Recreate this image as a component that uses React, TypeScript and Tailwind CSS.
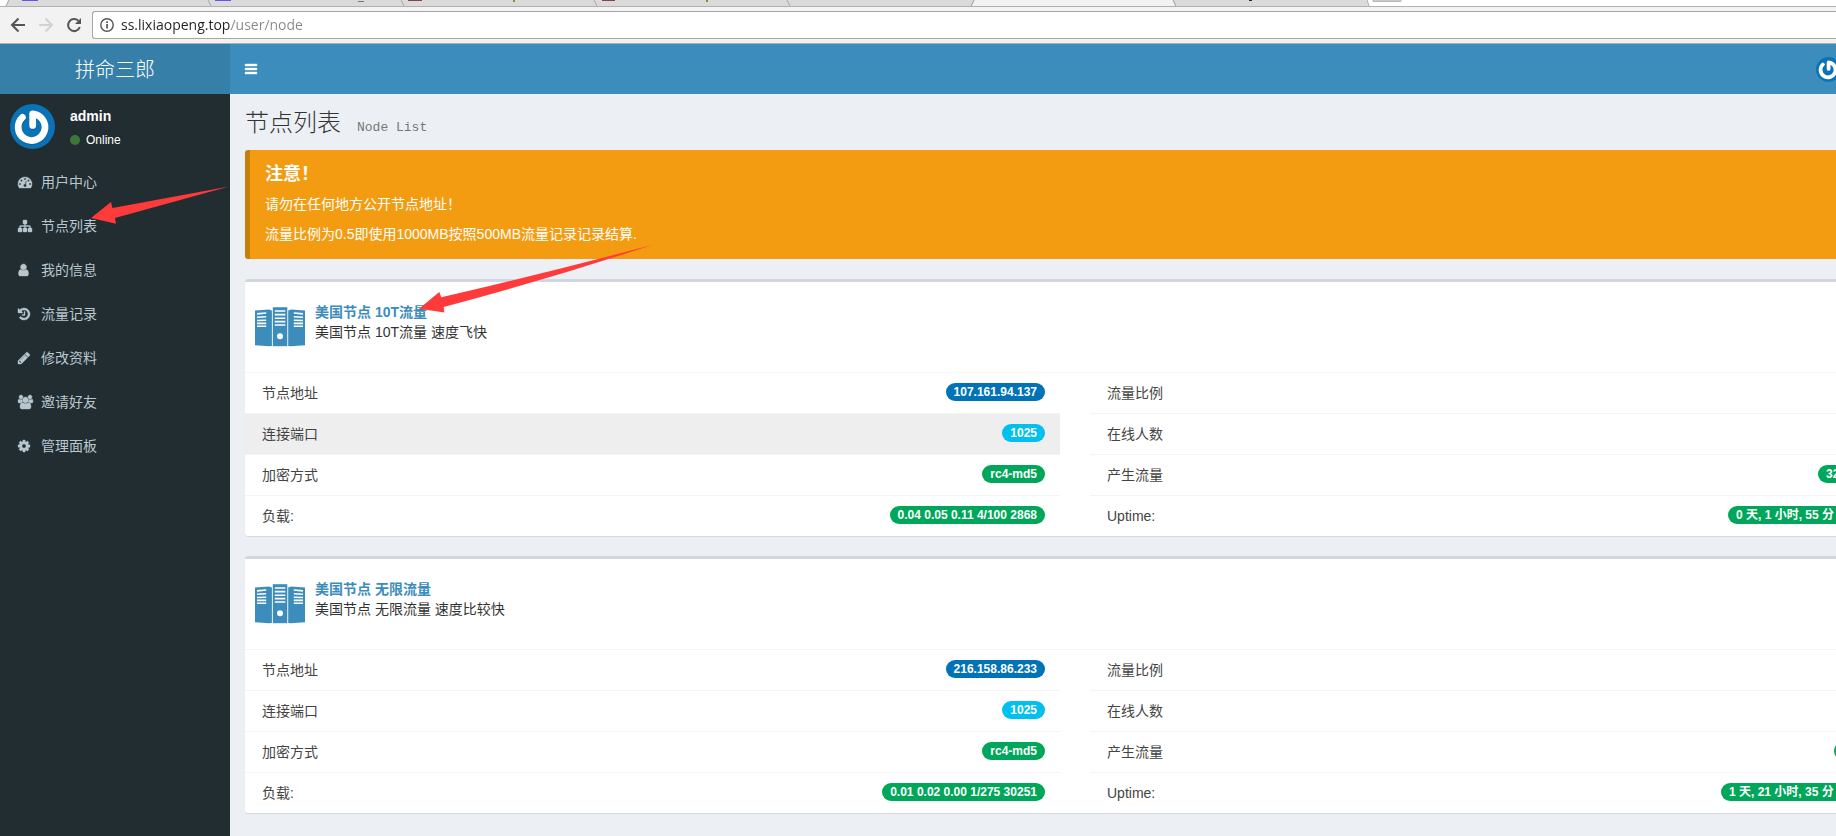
import React from "react";

const PATHS = {
  bars: "M1664 1344v128q0 26-19 45t-45 19h-1408q-26 0-45-19t-19-45v-128q0-26 19-45t45-19h1408q26 0 45 19t19 45zm0-512v128q0 26-19 45t-45 19h-1408q-26 0-45-19t-19-45v-128q0-26 19-45t45-19h1408q26 0 45 19t19 45zm0-512v128q0 26-19 45t-45 19h-1408q-26 0-45-19t-19-45v-128q0-26 19-45t45-19h1408q26 0 45 19t19 45z",
  dashboard: "M384 1152q0-53-37.5-90.5t-90.5-37.5-90.5 37.5-37.5 90.5 37.5 90.5 90.5 37.5 90.5-37.5 37.5-90.5zm192-448q0-53-37.5-90.5t-90.5-37.5-90.5 37.5-37.5 90.5 37.5 90.5 90.5 37.5 90.5-37.5 37.5-90.5zm428 481l101-382q6-26-7.5-48.5t-38.5-29.5-48 6.5-30 39.5l-101 382q-60 5-107 43.5t-63 98.5q-20 77 20 146t117 89 146-20 89-117q16-60-6-117t-72-91zm660-33q0-53-37.5-90.5t-90.5-37.5-90.5 37.5-37.5 90.5 37.5 90.5 90.5 37.5 90.5-37.5 37.5-90.5zm-640-640q0-53-37.5-90.5t-90.5-37.5-90.5 37.5-37.5 90.5 37.5 90.5 90.5 37.5 90.5-37.5 37.5-90.5zm448 192q0-53-37.5-90.5t-90.5-37.5-90.5 37.5-37.5 90.5 37.5 90.5 90.5 37.5 90.5-37.5 37.5-90.5zm320 448q0 261-141 483-19 29-54 29h-1402q-35 0-54-29-141-221-141-483 0-182 71-348t191-286 286-191 348-71 348 71 286 191 191 286 71 348z",
  sitemap: "M1792 1248v320q0 40-28 68t-68 28h-320q-40 0-68-28t-28-68v-320q0-40 28-68t68-28h96v-192h-512v192h96q40 0 68 28t28 68v320q0 40-28 68t-68 28h-320q-40 0-68-28t-28-68v-320q0-40 28-68t68-28h96v-192h-512v192h96q40 0 68 28t28 68v320q0 40-28 68t-68 28h-320q-40 0-68-28t-28-68v-320q0-40 28-68t68-28h96v-192q0-52 38-90t90-38h512v-192h-96q-40 0-68-28t-28-68v-320q0-40 28-68t68-28h320q40 0 68 28t28 68v320q0 40-28 68t-68 28h-96v192h512q52 0 90 38t38 90v192h96q40 0 68 28t28 68z",
  user: "M1536 1399q0 109-62.5 187t-150.5 78h-854q-88 0-150.5-78t-62.5-187q0-85 8.5-160.5t31.5-152 58.5-131 94-89 134.5-34.5q131 128 313 128t313-128q76 0 134.5 34.5t94 89 58.5 131 31.5 152 8.5 160.5zm-256-887q0 159-112.5 271.5t-271.5 112.5-271.5-112.5-112.5-271.5 112.5-271.5 271.5-112.5 271.5 112.5 112.5 271.5z",
  history: "M1664 896q0 156-61 298t-164 245-245 164-298 61q-172 0-327-72.5t-264-204.5q-7-10-6.5-22.5t8.5-20.5l137-138q10-9 25-9 16 2 23 12 73 95 179 147t225 52q104 0 198.5-40.5t163.5-109.5 109.5-163.5 40.5-198.5-40.5-198.5-109.5-163.5-163.5-109.5-198.5-40.5q-98 0-188 35.5t-160 101.5l137 138q31 30 14 69-17 40-59 40h-448q-26 0-45-19t-19-45v-448q0-42 40-59 39-17 69 14l130 129q107-101 244.5-156.5t284.5-55.5q156 0 298 61t245 164 164 245 61 298zm-640-288v448q0 14-9 23t-23 9h-320q-14 0-23-9t-9-23v-64q0-14 9-23t23-9h224v-352q0-14 9-23t23-9h64q14 0 23 9t9 23z",
  pencil: "M491 1536l91-91-235-235-91 91v107h128v128h107zm523-928q0-22-22-22-10 0-17 7l-542 542q-7 7-7 17 0 22 22 22 10 0 17-7l542-542q7-7 7-17zm-54-192l416 416-832 832h-416v-416zm683 96q0 53-37 90l-166 166-416-416 166-165q36-38 90-38 53 0 91 38l235 234q37 39 37 91z",
  users: "M593 896q-162 5-265 128h-134q-82 0-138-40.5t-56-118.5q0-353 124-353 6 0 43.5 21t97.5 42.5 119 21.5q67 0 133-23-5 37-5 66 0 139 81 256zm1071 637q0 120-73 189.5t-194 69.5h-874q-121 0-194-69.5t-73-189.5q0-53 3.5-103.5t14-109 26.5-108.5 43-97.5 62-81 85.5-53.5 111.5-20q10 0 43 21.5t73 48 107 48 135 21.5 135-21.5 107-48 73-48 43-21.5q61 0 111.5 20t85.5 53.5 62 81 43 97.5 26.5 108.5 14 109 3.5 103.5zm-1024-1277q0 106-75 181t-181 75-181-75-75-181 75-181 181-75 181 75 75 181zm704 384q0 159-112.5 271.5t-271.5 112.5-271.5-112.5-112.5-271.5 112.5-271.5 271.5-112.5 271.5 112.5 112.5 271.5zm576 225q0 78-56 118.5t-138 40.5h-134q-103-123-265-128 81-117 81-256 0-29-5-66 66 23 133 23 59 0 119-21.5t97.5-42.5 43.5-21q124 0 124 353zm-128-609q0 106-75 181t-181 75-181-75-75-181 75-181 181-75 181 75 75 181z",
  cog: "M1152 896q0-106-75-181t-181-75-181 75-75 181 75 181 181 75 181-75 75-181zm512-109v222q0 12-8 23t-20 13l-185 28q-19 54-39 91 35 50 107 138 10 12 10 25t-9 23q-27 37-99 108t-94 71q-12 0-26-9l-138-108q-44 23-91 38-16 136-29 186-7 28-36 28h-222q-14 0-24.5-8.5t-11.5-21.5l-28-184q-49-16-90-37l-141 107q-10 9-25 9-14 0-25-11-126-114-165-168-7-10-7-23 0-12 8-23 15-21 51-66.5t54-70.5q-27-50-41-99l-183-27q-13-2-21-12.5t-8-23.5v-222q0-12 8-23t19-13l186-28q14-46 39-92-40-57-107-138-10-12-10-24 0-10 9-23 26-36 98.5-107.5t94.5-71.5q13 0 26 10l138 107q44-23 91-38 16-136 29-186 7-28 36-28h222q14 0 24.5 8.5t11.5 21.5l28 184q49 16 90 37l142-107q9-9 24-9 13 0 25 10 129 119 165 170 7 8 7 22 0 12-8 23-15 21-51 66.5t-54 70.5q26 50 41 98l183 28q13 2 21 12.5t8 23.5z",
};

type IconName = keyof typeof PATHS;

/* Left edge of each glyph in the shared 1792-unit grid. */
const LEFT: Record<IconName, number> = {
  bars: 128,
  dashboard: 0,
  sitemap: 0,
  user: 192,
  history: 128,
  pencil: 128,
  users: 0,
  cog: 128,
};

function Icon({ name }: { name: IconName }) {
  return (
    <svg
      viewBox={`${LEFT[name]} 0 1920 1792`}
      className="h-[14px] w-[15px] shrink-0 overflow-visible fill-current stroke-current"
      strokeWidth="50"
      aria-hidden="true"
    >
      <path d={PATHS[name]} />
    </svg>
  );
}

function Avatar({ className }: { className: string }) {
  return (
    <svg viewBox="0 0 45 45" className={className} aria-hidden="true">
      <circle cx="22.5" cy="22.5" r="22.5" fill="#0a73b8" />
      <g fill="none" strokeWidth="6.8" strokeLinecap="round" strokeLinejoin="round">
        <path d="M23 22.6V11.2A13.2 13.2 0 1 1 13 14.6" stroke="#07568c" opacity="0.6" />
        <path d="M22.7 21.4V9.800A13.400 13.400 0 1 1 12.400 13.400" stroke="#fff" />
      </g>
    </svg>
  );
}

function ServerIcon() {
  return (
    <svg viewBox="0 -5 50 50" className="size-[50px] shrink-0" aria-hidden="true">
      <g fill="#3c8dbc">
        <path d="M0 3.6L14 2.4l2.9 1V38.9L14 39.3 0 38.3z" />
        <rect x="17.8" y="0.2" width="14.5" height="39" />
        <path d="M50 3.6L36 2.4l-2.800 1V38.900L36 39.300l14-1z" />
      </g>
      <g stroke="#fff" strokeWidth="1.6">
        <path d="M19.8 4h10.5M19.8 7.6h10.5M19.8 11.2h10.5M19.8 14.6h10.5M19.8 18h10.5" />
        <path d="M2 6.9l9.2-.9M2 10.3l9.2-.6M2 13.5l9.2-.3M2 16.4h9.2M2 19.3h9.2" />
        <path d="M48 6.9l-9.2-.9M48 10.3l-9.2-.6M48 13.5l-9.2-.3M48 16.4h-9.2M48 19.3h-9.2" />
      </g>
      <circle cx="25" cy="29.3" r="3" fill="#fff" />
    </svg>
  );
}

function TabStrip() {
  return (
    <div className="flex h-[7px] overflow-hidden border-b border-[#b2b2b2] bg-white">
      <svg width="1403" height="7" viewBox="0 0 1403 7" className="-mb-px shrink-0" aria-hidden="true">
        <path d="M8 0L5 7H971L974 0z" fill="#dadada" />
        <path d="M974 0L971 7H1176L1173 0z" fill="#f2f2f2" />
        <path d="M1173 0L1176 7H1369L1366 0z" fill="#dadada" />
        <path d="M0 6.5H971L974 0M1173 0L1176 6.5H1369" fill="none" stroke="#9c9c9c" />
        <path d="M9 0L6 6M208 0l3 6M401 0l3 6M594 0l3 6M787 0l3 6M1367 0l2 6" fill="none" stroke="#a8a8a8" />
        <path d="M22 0h16v1H22zM215 0h16v1h-16z" fill="#5a5af0" />
        <path d="M358 1h6v1h-6z" fill="#777" />
        <path d="M408 0h14v1h-14zM602 0h13v1h-13z" fill="#7a4a3c" />
        <path d="M513 0h2v2h-2zM706 0h2v2h-2z" fill="#9a8040" />
        <path d="M1249 0h3v1h-3z" fill="#222244" />
        <path d="M1373 0h28v1.5h-28z" fill="#d6d6d6" stroke="#bbb" />
      </svg>
    </div>
  );
}

function Toolbar() {
  return (
    <div className="flex h-[37px] items-center border-b border-[#b0b0b0] bg-[#f2f2f2] pl-1">
      <button type="button" aria-label="Back" className="flex w-7 justify-center">
        <svg width="16" height="16" viewBox="0 0 16 16" fill="none" stroke="#555" strokeWidth="2">
          <path d="M15 8H2.5M8.5 1.5L2 8l6.5 6.5" />
        </svg>
      </button>
      <button type="button" aria-label="Forward" className="flex w-7 justify-center">
        <svg width="16" height="16" viewBox="0 0 16 16" fill="none" stroke="#d2d2d2" strokeWidth="2">
          <path d="M1 8h12.500M7.500 1.500L14 8l-6.500 6.500" />
        </svg>
      </button>
      <button type="button" aria-label="Reload" className="mr-1 flex w-7 justify-center">
        <svg width="16" height="16" viewBox="0 0 16 16" fill="none" stroke="#555" strokeWidth="2">
          <path d="M13.800 10A6 6 0 1 1 12.300 3.800" />
          <path d="M15 1v6H9z" fill="#555" stroke="none" />
        </svg>
      </button>
      <label className="flex h-7 flex-1 items-center gap-[7px] rounded-l-[3px] border border-r-0 border-[#a6a6a6] bg-white pl-[7px]">
        <svg width="14" height="14" viewBox="0 0 14 14" className="shrink-0" aria-hidden="true">
          <circle cx="7" cy="7" r="6.200" fill="none" stroke="#555" strokeWidth="1.400" />
          <path d="M6.200 6h1.700v4.500H6.200zM6.200 3.300h1.700v1.600H6.200z" fill="#555" />
        </svg>
        <input
          aria-label="Address"
          defaultValue="ss.lixiaopeng.top/user/node"
          className="h-6 w-full bg-[linear-gradient(to_right,#222222_110px,#888888_110px)] bg-clip-text pb-[2px] font-['Open_Sans','Noto_Sans',sans-serif] text-[14px] text-transparent outline-none"
        />
      </label>
    </div>
  );
}

const MENU: { icon: IconName; label: string }[] = [
  { icon: "dashboard", label: "用户中心" },
  { icon: "sitemap", label: "节点列表" },
  { icon: "user", label: "我的信息" },
  { icon: "history", label: "流量记录" },
  { icon: "pencil", label: "修改资料" },
  { icon: "users", label: "邀请好友" },
  { icon: "cog", label: "管理面板" },
];

function Sidebar() {
  return (
    <aside className="w-[230px] shrink-0 bg-[#222d32]">
      <div className="flex gap-[15px] p-[10px] text-white">
        <Avatar className="size-[45px]" />
        <div className="-mb-1 pt-[2px]">
          <p className="text-[14px] leading-5 font-bold">admin</p>
          <a href="#status" className="mt-1 flex items-center gap-[6px] text-[12px] leading-5">
            <span className="size-[10px] rounded-full bg-[#3c763d]" />
            Online
          </a>
        </div>
      </div>
      <nav>
        {MENU.map((m) => (
          <a key={m.label} href="#menu" className="flex h-11 items-center pt-px pl-[18px] text-[14px] leading-5 text-[#b8c7ce]">
            <span className="w-[23px]">
              <Icon name={m.icon} />
            </span>
            {m.label}
          </a>
        ))}
      </nav>
    </aside>
  );
}

interface Row {
  label: string;
  value?: string;
  tone?: string;
  active?: boolean;
}

interface NodeInfo {
  name: string;
  desc: string;
  left: Row[];
  right: Row[];
}

const BLUE = "bg-[#0073b7]";
const AQUA = "bg-[#00c0ef]";
const GREEN = "bg-[#00a65a]";

const NODES: NodeInfo[] = [
  {
    name: "美国节点 10T流量",
    desc: "美国节点 10T流量 速度飞快",
    left: [
      { label: "节点地址", value: "107.161.94.137", tone: BLUE },
      { label: "连接端口", value: "1025", tone: AQUA, active: true },
      { label: "加密方式", value: "rc4-md5", tone: GREEN },
      { label: "负载:", value: "0.04 0.05 0.11 4/100 2868", tone: GREEN },
    ],
    right: [
      { label: "流量比例" },
      { label: "在线人数" },
      { label: "产生流量", value: "32", tone: "bg-[#00a65a] w-[72px]" },
      { label: "Uptime:", value: "0 天, 1 小时, 55 分", tone: "bg-[#00a65a] w-[162px]" },
    ],
  },
  {
    name: "美国节点 无限流量",
    desc: "美国节点 无限流量 速度比较快",
    left: [
      { label: "节点地址", value: "216.158.86.233", tone: BLUE },
      { label: "连接端口", value: "1025", tone: AQUA },
      { label: "加密方式", value: "rc4-md5", tone: GREEN },
      { label: "负载:", value: "0.01 0.02 0.00 1/275 30251", tone: GREEN },
    ],
    right: [
      { label: "流量比例" },
      { label: "在线人数" },
      { label: "产生流量", value: "", tone: "bg-[#00a65a] w-[56px]" },
      { label: "Uptime:", value: "1 天, 21 小时, 35 分", tone: "bg-[#00a65a] w-[169px]" },
    ],
  },
];

function RowList({ rows }: { rows: Row[] }) {
  return (
    <ul className="flex-1 divide-y divide-[#f4f4f4]">
      {rows.map((r) => (
        <li key={r.label}>
          <a
            href="#node"
            className={`flex items-start justify-between py-[10px] pr-[15px] pl-[17px] text-[14px] leading-5 text-[#444] ${r.active ? "bg-[#eeeeee]" : ""}`}
          >
            {r.label}
            {r.tone && (
              <span
                className={`h-[18px] rounded-[10px] px-2 text-[12px] leading-[18px] font-bold whitespace-nowrap text-white ${r.tone}`}
              >
                {r.value}
              </span>
            )}
          </a>
        </li>
      ))}
    </ul>
  );
}

function NodeCard({ node }: { node: NodeInfo }) {
  return (
    <section className="rounded-[3px] border-t-[3px] border-[#d2d6de] bg-white shadow-[0_1px_1px_rgba(0,0,0,0.1)]">
      <div className="flex gap-[10px] px-[10px] py-5">
        <ServerIcon />
        <div className="text-[14px] leading-5">
          <h3 className="font-bold text-[#3c8dbc]">{node.name}</h3>
          <p className="text-[#333]">{node.desc}</p>
        </div>
      </div>
      <div className="flex gap-[30px] border-t border-[#f4f4f4]">
        <RowList rows={node.left} />
        <RowList rows={node.right} />
      </div>
    </section>
  );
}

function Arrows() {
  return (
    <svg width="700" height="340" className="pointer-events-none absolute top-0 left-0" fill="#ff3a3a" aria-hidden="true">
      <path d="M91 218L111 202l1.500 6L229 186.500 115 218l1 5.700z" />
      <path d="M419 308.700L439.300 292l2 5.300Q546 273 652 245 546 280 443.700 307l.6 5.600z" />
    </svg>
  );
}

export default function App() {
  return (
    <div className="relative flex min-h-screen flex-col overflow-hidden bg-[#ecf0f5] font-['Liberation_Sans','Noto_Sans_CJK_SC',sans-serif]">
      <TabStrip />
      <Toolbar />
      <div className="flex w-[calc(100%+84px)] flex-1 flex-col">
        <header className="flex h-[50px] text-white">
          <a href="#home" className="flex w-[230px] items-center justify-center bg-[#367fa9] pt-[2px] text-[20px] font-light">
            拼命三郎
          </a>
          <div className="flex flex-1 items-center justify-between bg-[#3c8dbc] pr-[79px] pl-[15px]">
            <button type="button" aria-label="Toggle navigation">
              <Icon name="bars" />
            </button>
            <Avatar className="size-[25px]" />
          </div>
        </header>
        <div className="flex flex-1">
          <Sidebar />
          <main className="flex-1 px-[15px] pb-5">
            <h1 className="flex h-14 items-baseline gap-4 pt-[11px] text-[24px] leading-9 font-light text-[#333]">
              节点列表
              <small className="font-['Liberation_Mono',monospace] text-[13px] text-[#777]">Node List</small>
            </h1>
            <div className="mb-5 rounded-[3px] border-l-[5px] border-[#c87f0a] bg-[#f39c12] p-[15px] text-[14px] leading-5 text-white">
              <h4 className="mb-[10px] text-[18px] leading-[19px] font-bold">注意！</h4>
              <p className="mb-[10px]">请勿在任何地方公开节点地址！</p>
              <p>流量比例为0.5即使用1000MB按照500MB流量记录记录结算.</p>
            </div>
            <div className="flex flex-col gap-5">
              {NODES.map((n) => (
                <NodeCard key={n.name} node={n} />
              ))}
            </div>
          </main>
        </div>
      </div>
      <Arrows />
    </div>
  );
}
